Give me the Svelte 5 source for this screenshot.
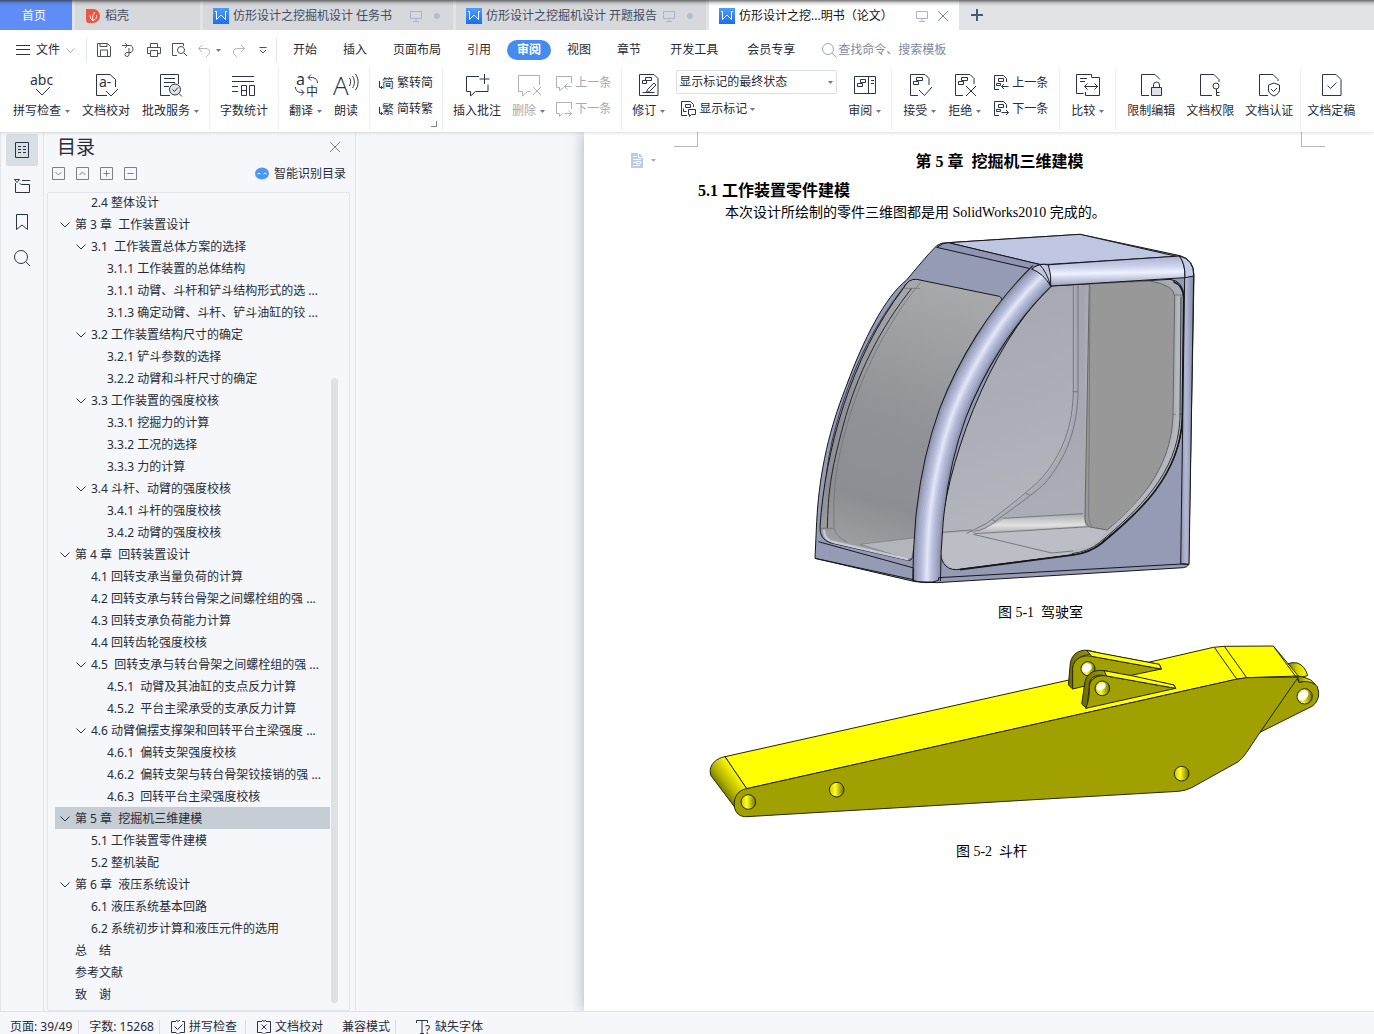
<script>
  const docTabs = [
    { title: '仿形设计之挖掘机设计 任务书', active: false },
    { title: '仿形设计之挖掘机设计 开题报告', active: false },
    { title: '仿形设计之挖...明书（论文）', active: true }
  ];

  const menus = ['开始', '插入', '页面布局', '引用', '审阅', '视图', '章节', '开发工具', '会员专享'];

  const toc = [
    [2, '2.4 整体设计'],
    [1, '第 3 章  工作装置设计', true],
    [2, '3.1  工作装置总体方案的选择', true],
    [3, '3.1.1 工作装置的总体结构'],
    [3, '3.1.1 动臂、斗杆和铲斗结构形式的选 ...'],
    [3, '3.1.3 确定动臂、斗杆、铲斗油缸的铰 ...'],
    [2, '3.2 工作装置结构尺寸的确定', true],
    [3, '3.2.1 铲斗参数的选择'],
    [3, '3.2.2 动臂和斗杆尺寸的确定'],
    [2, '3.3 工作装置的强度校核', true],
    [3, '3.3.1 挖掘力的计算'],
    [3, '3.3.2 工况的选择'],
    [3, '3.3.3 力的计算'],
    [2, '3.4 斗杆、动臂的强度校核', true],
    [3, '3.4.1 斗杆的强度校核'],
    [3, '3.4.2 动臂的强度校核'],
    [1, '第 4 章  回转装置设计', true],
    [2, '4.1 回转支承当量负荷的计算'],
    [2, '4.2 回转支承与转台骨架之间螺栓组的强 ...'],
    [2, '4.3 回转支承负荷能力计算'],
    [2, '4.4 回转齿轮强度校核'],
    [2, '4.5  回转支承与转台骨架之间螺栓组的强 ...', true],
    [3, '4.5.1  动臂及其油缸的支点反力计算'],
    [3, '4.5.2  平台主梁承受的支承反力计算'],
    [2, '4.6 动臂偏摆支撑架和回转平台主梁强度 ...', true],
    [3, '4.6.1  偏转支架强度校核'],
    [3, '4.6.2  偏转支架与转台骨架铰接销的强 ...'],
    [3, '4.6.3  回转平台主梁强度校核'],
    [1, '第 5 章  挖掘机三维建模', true],
    [2, '5.1 工作装置零件建模'],
    [2, '5.2 整机装配'],
    [1, '第 6 章  液压系统设计', true],
    [2, '6.1 液压系统基本回路'],
    [2, '6.2 系统初步计算和液压元件的选用'],
    [1, '总　结'],
    [1, '参考文献'],
    [1, '致　谢']
  ];
  const current = '第 5 章  挖掘机三维建模';

  // Layered strokes that shade the curved front pillar as a round tube.
  const tube = [
    [80, '#8e93ad'], [70, '#9ba0bd'], [58, '#a6acca'], [46, '#b0b6d3'],
    [34, '#bcc2de'], [23, '#c9cee8'], [14, '#d6daf0'], [6, '#e0e4f7']
  ];
</script>

{#snippet caret()}
  <svg class="caret" width="5" height="3" viewBox="0 0 5 3"><path d="M0 0h5L2.5 3z" /></svg>
{/snippet}

{#snippet screen()}
  <svg class="ic screen" width="12" height="12" viewBox="0 0 12 12"><path d="M.5 1.5h11v7H.5zM6 8.5v3M3 11.5h6" /></svg>
{/snippet}

{#snippet small(name)}
  <svg class="ic" width="16" height="16" viewBox="0 0 16 16">
    {#if name === 'simp'}
      <text x="4" y="13" font-size="12">简</text><path d="M1.5 6v6.500h3M3 11l1.500 1.500L3 14" />
    {:else if name === 'trad'}
      <text x="4" y="13" font-size="12">繁</text><path d="M1.500 6v6.500h3M3 11l1.500 1.500L3 14" />
    {:else if name === 'cprev'}
      <path d="M15.500 8V1.500H.500v11h3v3l4-3M15.500 11.500h-7M11.500 8.500l-3 3 3 3" />
    {:else if name === 'cnext'}
      <path d="M15.500 8V1.500H.500v11h3v3l3-3M8.500 12.500h7M12.500 9.500l3 3-3 3" />
    {:else if name === 'marks'}
      <path d="M7 14.500H1.500V.500h9l3 3V6M5.500 3.500h5v3h-5zM3.500 7.500v3h3M8.500 8.500h7v5h-4l-2 2v-2h-1z" />
    {:else if name === 'prev'}
      <path d="M6 14.500H1.500V.500h9l3 3V7M5.500 3.500h5v3h-5zM3.500 8.500h4v2h-4zM15.500 11.500h-7M11 9l-2.500 2.500L11 14" />
    {:else if name === 'next'}
      <path d="M6 14.500H1.500V.500h9l3 3V7M5.500 3.500h5v3h-5zM3.500 8.500h4v2h-4zM8.500 11.500h7M13 9l2.500 2.500L13 14" />
    {:else if name === 'check'}
      <path d="M6 2.500H1.500v11H6l2 2 2-2h4.500v-11H12M6 1l2 1.500L10 1M4.500 7.500l3 3 5-5" />
    {:else if name === 'cross'}
      <path d="M6 2.500H1.500v11H6l2 2 2-2h4.500v-11H10M6 1l2 1.500L10 1M5.500 5.500l5 5M10.500 5.500l-5 5" />
    {:else if name === 'font'}
      <path d="M.500 4V1.500h11V4M6 1.500v13M4 14.500h4" /><text x="9" y="15" font-size="12">?</text>
    {/if}
  </svg>
{/snippet}

{#snippet big(name)}
  <svg class="ic" width="26" height="26" viewBox="0 0 26 26">
    {#if name === 'spell'}
      <text x="1" y="13" font-size="14">abc</text><path d="M7 17l6 6 8-8" />
    {:else if name === 'proof'}
      <path d="M14 23.500H3.500v-21H17l5.500 5V15M13 19l5 5 7-7" /><text x="6" y="15" font-size="14">a-</text>
    {:else if name === 'batch'}
      <path d="M12 23.500H2.500v-21h18V12M6 6.500h11M6 10.500h11M6 14.500h5" />
      <circle cx="17" cy="17.500" r="5.500" class="soft" /><path d="M14.500 17.500l2 2 3.500-4M21 21.500l3 3" />
    {:else if name === 'count'}
      <path d="M1 4.500h22M1 9.500h22M1 14.500h6M1 19.500h6M10.500 13.500h5v10h-5zM10.500 18.500h5M18.500 13.500h5v10h-5z" />
    {:else if name === 'trans'}
      <text x="3" y="13" font-size="16">a</text><text x="13" y="24" font-size="12">中</text>
      <path d="M24.500 11c0-4-3-6-9-5.500M18 2.500l-3 3 3 3M2.500 15c0 4 3 6 8 5.500M8 17.500l3 3-3 3" />
    {:else if name === 'read'}
      <text x="0" y="23" font-size="26" class="thin">A</text>
      <path d="M16.500 6c1.500 2 1.500 5 0 8M19.500 4c2.500 3.500 2.500 8.500 0 12M22.500 2c3.500 5 3.500 11 0 16" />
    {:else if name === 'comment'}
      <path d="M15 4.500H2.500v15h4V24l5-4.500h12.500V12.500M20.500 2v10M15.500 7h10" />
    {:else if name === 'delcomment'}
      <path d="M23.500 13V3.500h-21v16h4V24l5-4.500h3M17 15l8 8M25 15l-8 8" />
    {:else if name === 'track'}
      <path d="M3.500 2.500H18l4 4v17H3.500zM9.500 5.500h6v3h-6zM6.500 8.500h4v3h-4zM11.500 17.500l6.500-6.500 2 2-6.500 6.500-3 1z M6.500 20.500h12" />
    {:else if name === 'pane'}
      <path d="M2.500 4.500h21v17h-21zM16.500 4.500v17M8.500 7.500h5v3h-5zM5.500 11.500h5v3h-5zM19 8.500h3M19 11.500h3" />
    {:else if name === 'accept'}
      <path d="M11 23.500H3.500v-21H18l4 4V13M9.500 5.500h6v3h-6zM6.500 9.500h5v3h-5zM12 18l5.500 5.500L25 15" />
    {:else if name === 'reject'}
      <path d="M11 23.500H3.500v-21H18l4 4V12M9.500 5.500h6v3h-6zM6.500 9.500h5v3h-5zM14 14l10 10M24 14L14 24" />
    {:else if name === 'compare'}
      <path d="M16.500 5V2.500h-15v19h7M16.500 5.500h8v18h-14V20M5 6.500h7M5 9.500h5M9.500 14.500h13M12.500 11.500l-3 3 3 3M19.500 11.500l3 3-3 3" />
    {:else if name === 'lock'}
      <path d="M11 23.500H3.500v-21H17l5 5" /><path class="soft" d="M13.500 15.500h10v8h-10z" /><path d="M15.500 15.500V13a3 3 0 0 1 6 0v2.500" />
    {:else if name === 'key'}
      <path d="M15 23.500H3.500v-21H17l5 5V10" /><circle cx="19" cy="14" r="3" /><path d="M19.500 17v6.500h3M19.500 20.500h3" />
    {:else if name === 'shield'}
      <path d="M12 23.500H3.500v-21H17l5 5V9M18 11l5.500 2v5c0 3-2.500 4.500-5.500 6-3-1.500-5.500-3-5.500-6v-5zM15 17l2.500 2.500L21 16" />
    {:else if name === 'final'}
      <path d="M4.500 2.500H18l5 5v16H4.500zM9.500 13.500l3 3 6-6" />
    {/if}
  </svg>
{/snippet}

{#snippet tool(name, label, drop = false, off = false)}
  <button class="tool" disabled={off}>
    {@render big(name)}
    <span class="lab">{label}{#if drop}{@render caret()}{/if}</span>
  </button>
{/snippet}

{#snippet row(name, label, off = false)}
  <button class="row" disabled={off}>{@render small(name)}{label}</button>
{/snippet}

{#snippet wlogo()}
  <svg width="16" height="16" viewBox="0 0 16 16">
    <defs><linearGradient id="wg" x2="0" y2="1"><stop stop-color="#4f9bfa" /><stop offset="1" stop-color="#1b6ff0" /></linearGradient></defs>
    <path fill="url(#wg)" d="M0 0h16v16H0z" /><path fill="none" stroke="#fff" d="M2 3.500h1.500v8L8 7l4.500 4.500v-8H14" />
  </svg>
{/snippet}

<div class="app">
  <header>
    <div class="tabs">
      <button class="home">首页</button>
      <button class="tab docer">
        <svg width="14" height="14" viewBox="0 0 14 14"><path fill="#ee5543" d="M0 0h7a7 7 0 1 1 0 14H3a3 3 0 0 1-3-3z" /><path fill="none" stroke="#fff" d="M4 6c0 3 1 4.500 3 5.500C6 8 7 5 9 3M7 11.500c3-1 4-3 3.500-5.500" /></svg>
        稻壳
      </button>
      {#each docTabs as t}
        <button class="tab" class:active={t.active}>
          {@render wlogo()}<span class="name">{t.title}</span>{@render screen()}
          {#if t.active}
            <svg class="ic x" width="10" height="10" viewBox="0 0 10 10"><path d="M0 0l10 10M10 0L0 10" /></svg>
          {:else}<i class="dot"></i>{/if}
        </button>
      {/each}
      <button class="plus" aria-label="新建"><svg width="12" height="12" viewBox="0 0 12 12"><path d="M6 0v12M0 6h12" stroke="#4a5a75" stroke-width="2" /></svg></button>
    </div>

    <nav class="menu">
      <button class="file">
        <svg class="ic" width="14" height="10" viewBox="0 0 14 10"><path d="M0 .500h14M0 4.500h14M0 9.500h14" /></svg>
        文件
        <svg class="ic pale" width="9" height="5" viewBox="0 0 9 5"><path d="M.500.500l4 4 4-4" /></svg>
      </button>
      <div class="quick">
        <button aria-label="保存"><svg class="ic" width="14" height="14" viewBox="0 0 14 14"><path d="M.500.500h10l3 3v10H.500zM3 .500v3h7v-3M3.500 13v-6h7v6" /></svg></button>
        <button aria-label="输出"><svg class="ic" width="14" height="14" viewBox="0 0 14 14"><path d="M0 2.500h9a4 4 0 0 1 0 7H5a2 2 0 1 0 2 2V5M3 0l2.500 2.500L3 5" /></svg></button>
        <button aria-label="打印"><svg class="ic" width="14" height="14" viewBox="0 0 14 14"><path d="M3.500 4V.500h7V4M3 10.500H.500v-6h13v6H11M3.500 7.500h7v6h-7z" /></svg></button>
        <button aria-label="打印预览"><svg class="ic" width="15" height="14" viewBox="0 0 15 14"><path d="M5 12.500H.500v-12h11V3M12 10l3 3" /><circle cx="9" cy="7" r="3.500" /></svg></button>
        <button aria-label="撤销" class="undo"><svg class="ic pale" width="13" height="13" viewBox="0 0 13 13"><path d="M4 1L.500 4.500 4 8M.500 4.500H8a3.500 3.500 0 0 1 2 6.500L8 13" /></svg>{@render caret()}</button>
        <button aria-label="恢复"><svg class="ic pale" width="13" height="13" viewBox="0 0 13 13"><path d="M9 1l3.500 3.500L9 8M12.500 4.500H5a3.500 3.500 0 0 0-2 6.500L5 13" /></svg></button>
        <button aria-label="更多" class="more"><svg class="ic" width="8" height="8" viewBox="0 0 8 8"><path d="M.500 1.500h7M1 4l3 3 3-3" /></svg></button>
      </div>
      {#each menus as m}
        <button class="m" class:wide={m === '开发工具'} class:on={m === '审阅'}>{m}</button>
      {/each}
      <label class="find">
        <svg class="ic" width="15" height="15" viewBox="0 0 15 15"><circle cx="6" cy="6" r="5.500" /><path d="M10 10l4.500 4.500" /></svg>
        <input aria-label="查找命令" placeholder="查找命令、搜索模板" />
      </label>
    </nav>

    <div class="ribbon">
      <div class="group">
        {@render tool('spell', '拼写检查', true)}
        {@render tool('proof', '文档校对')}
        {@render tool('batch', '批改服务', true)}
      </div>
      <div class="group">{@render tool('count', '字数统计')}</div>
      <div class="group">
        {@render tool('trans', '翻译', true)}
        {@render tool('read', '朗读')}
      </div>
      <div class="group corner">
        <div class="rows">{@render row('simp', '繁转简')}{@render row('trad', '简转繁')}</div>
      </div>
      <div class="group">
        {@render tool('comment', '插入批注')}
        {@render tool('delcomment', '删除', true, true)}
        <div class="rows">{@render row('cprev', '上一条', true)}{@render row('cnext', '下一条', true)}</div>
      </div>
      <div class="group">
        {@render tool('track', '修订', true)}
        <div class="state">
          <div class="combo">
            <select aria-label="标记状态"><option>显示标记的最终状态</option></select>{@render caret()}
          </div>
          <button class="row marks">{@render small('marks')}显示标记{@render caret()}</button>
        </div>
        {@render tool('pane', '审阅', true)}
      </div>
      <div class="group changes">
        {@render tool('accept', '接受', true)}
        {@render tool('reject', '拒绝', true)}
        <div class="rows">{@render row('prev', '上一条')}{@render row('next', '下一条')}</div>
      </div>
      <div class="group">{@render tool('compare', '比较', true)}</div>
      <div class="group last">
        {@render tool('lock', '限制编辑')}
        {@render tool('key', '文档权限')}
        {@render tool('shield', '文档认证')}
      </div>
      <div class="group end">{@render tool('final', '文档定稿')}</div>
    </div>
  </header>

  <main>
    <aside class="rail">
      <button class="on" aria-label="目录"><svg class="ic" width="16" height="16" viewBox="0 0 16 16"><path d="M1.500.500h13v15h-13zM4 4.500h3M9 4.500h3M4 7.500h3M9 7.500h3M4 10.500h3M9 10.500h3" /></svg></button>
      <button aria-label="章节"><svg class="ic" width="16" height="16" viewBox="0 0 16 16"><path d="M.500 1.500h5L3 4.500zM8 2.500h8M1.500 5v9.500h14v-8h-8l-2-1" /></svg></button>
      <button aria-label="书签"><svg class="ic" width="16" height="18" viewBox="0 0 16 18"><path d="M2.500 1.500h11v15L8 12l-5.500 4.500z" /></svg></button>
      <button aria-label="查找"><svg class="ic" width="16" height="16" viewBox="0 0 16 16"><circle cx="7" cy="7" r="6.500" /><path d="M11.500 11.500L16 16" /></svg></button>
    </aside>

    <section class="panel">
      <div class="head">
        <h2>目录</h2>
        <button aria-label="关闭"><svg class="ic" width="10" height="10" viewBox="0 0 10 10"><path d="M0 0l10 10M10 0L0 10" /></svg></button>
      </div>
      <div class="ops">
        <button aria-label="展开"><svg class="ic" width="13" height="13" viewBox="0 0 13 13"><path d="M.500.500h12v12H.500zM3.500 5l3 3 3-3" /></svg></button>
        <button aria-label="收起"><svg class="ic" width="13" height="13" viewBox="0 0 13 13"><path d="M.500.500h12v12H.500zM3.500 8l3-3 3 3" /></svg></button>
        <button aria-label="增加"><svg class="ic" width="13" height="13" viewBox="0 0 13 13"><path d="M.500.500h12v12H.500zM3.500 6.500h6M6.500 3.500v6" /></svg></button>
        <button aria-label="减少"><svg class="ic" width="13" height="13" viewBox="0 0 13 13"><path d="M.500.500h12v12H.500zM3.500 6.500h6" /></svg></button>
        <button class="smart">
          <svg width="14" height="13" viewBox="0 0 14 13"><ellipse cx="7" cy="6.500" rx="7" ry="6" fill="#4a98f5" /><path d="M2.500 7q1.500-2 3 0M8.500 7q1.500-2 3 0" fill="none" stroke="#fff" /></svg>
          智能识别目录
        </button>
      </div>
      <div class="list">
        <ul>
          {#each toc as [level, text, open]}
            <li class="l{level}" class:sel={text === current}>
              {#if open}<svg class="ic" width="10" height="6" viewBox="0 0 10 6"><path d="M.500.500L5 5 9.500.500" /></svg>{/if}
              <a href="#doc">{text}</a>
            </li>
          {/each}
        </ul>
        <i class="thumb"></i>
      </div>
    </section>

    <div class="canvas">
      <article class="page" id="doc">
        <i class="mark left"></i>
        <i class="mark right"></i>
        <span class="badge">
          <svg width="12" height="15" viewBox="0 0 12 15"><path fill="#b9cde8" d="M0 0h8l4 4v11H0z" /><path fill="none" stroke="#fff" d="M7.500 0v4.500H12M2 3.500h4M2 6.500h8M2 9.500h3M5.500 8.500h4v2h-4zM2 12.500h7" /></svg>
          {@render caret()}
        </span>
        <h1>第 5 章&nbsp; 挖掘机三维建模</h1>
        <h3>5.1 工作装置零件建模</h3>
        <p>本次设计所绘制的零件三维图都是用 SolidWorks2010 完成的。</p>

        <figure class="cab">
          <svg width="380" height="350" viewBox="42 27 1140 1050">
            <defs>
              <linearGradient id="beam" x1="0" y1="0" x2="0.080" y2="1"><stop stop-color="#a4aac8" /><stop offset=".4" stop-color="#ccd2ec" /><stop offset=".6" stop-color="#eef1ff" /><stop offset="1" stop-color="#9aa0be" /></linearGradient>
              <linearGradient id="post"><stop stop-color="#8a8fab" /><stop offset=".4" stop-color="#b4bad6" /><stop offset="1" stop-color="#8489a4" /></linearGradient>
              <linearGradient id="glass" x1=".5" x2=".3" y2="1"><stop stop-color="#a6a8aa" /><stop offset=".5" stop-color="#909297" /><stop offset=".8" stop-color="#8c8e93" /><stop offset="1" stop-color="#a0a1a3" /></linearGradient>
              <linearGradient id="inner" x2=".3" y2="1"><stop stop-color="#a4a7af" /><stop offset=".6" stop-color="#adb0b8" /><stop offset="1" stop-color="#b7b9c0" /></linearGradient>
              <linearGradient id="sill" x2="0" y2="1"><stop stop-color="#aaacb0" /><stop offset=".6" stop-color="#e2e2e2" /><stop offset="1" stop-color="#b4b5b9" /></linearGradient>
            </defs>
            <g stroke="#16171c" stroke-width="3" stroke-linejoin="round" fill="none">
              <path fill="#969bb5" d="M410 62Q425 51 445 53L840 28 1140 92Q1182 103 1182 150L1166 1020Q1160 1027 1150 1028L410 1073 345 1070 45 1000 50 890C60 700 105 570 140 480C190 345 255 215 320 165C345 135 380 92 410 62Z" />
              <path fill="#bfc6e1" d="M445 53L840 28 1130 94 750 118 718 118Z" />
              <path fill="#8f95b2" d="M410 67Q428 53 445 53L718 118 695 132Z" />
              <path stroke="#3a3c44" stroke-width="3" d="M318 178C220 300 160 430 120 560S72 780 70 910" />
              <path fill="url(#glass)" d="M310 190Q325 160 350 163L598 214Q607 217 605 235C480 430 375 640 347 935L335 1003Q330 1008 320 1005L90 953Q58 942 60 905C75 680 150 400 310 190Z" />
              <path fill="#b3b5bc" stroke="#777" stroke-width="2" d="M180 958L347 938 335 1000 320 1002Z" />
              <path stroke="#26282f" stroke-width="3" d="M335 190C240 310 170 450 130 600S85 800 82 910" />
              <path stroke="#6a6c70" stroke-width="2" d="M362 172C280 270 200 410 150 570S100 820 102 905Q105 935 140 950M62 910H100M310 190H360" />
              <path stroke="#c5c9d8" stroke-width="7" d="M72 915Q73 945 100 951L325 1003" />
              <path d="M55 950L345 1030M45 1000L345 1065" stroke-width="3" />
              <path fill="url(#inner)" d="M752 183L1110 163Q1150 168 1152 215L1147 580C1140 750 1020 860 900 955Q865 985 810 990L470 1034Q415 1035 420 950C435 730 560 370 752 183Z" />
              <path fill="#9c9fa8" stroke="none" d="M826 180H855V890L580 885C640 840 690 800 715 775C800 690 822 600 826 500Z" opacity=".35" />
              <path fill="url(#sill)" stroke="none" d="M620 878L850 867 856 902 530 922Z" />
              <path fill="#bcbec5" stroke="none" d="M425 925L520 922 860 905 922 916 895 955Q865 985 810 987L470 1030Q425 1030 422 950Z" />
              <path fill="#989898" stroke="#666" stroke-width="3" d="M868 177L1050 168Q1124 180 1124 215L1119 570C1115 740 1000 850 922 915L870 906Q853 900 855 870Z" />
              <g stroke="#77797d" stroke-width="3">
                <path d="M820 181V500C818 600 790 690 715 770C660 820 600 865 560 895L500 925M834 180V500C832 610 800 700 730 780C670 830 610 870 585 890Q555 915 525 918M818 500h16M676 803l14 8M575 883l14 8" />
                <path d="M610 880L850 866M425 922L515 915 525 926 870 905M520 928L755 984 850 975M870 180L866 880Q868 900 880 908M1124 210H1150M1120 568H1147" />
              </g>
              <path stroke="#b5b8bf" stroke-width="12" d="M1137 215L1133 580C1126 740 1010 850 895 950Q865 975 820 981" />
              <path stroke="#33353b" stroke-width="3" d="M1143 215L1140 580C1133 745 1015 855 898 953Q865 980 815 986" />
              <path stroke-width="5" d="M1120 170Q1150 180 1151 220L1147 580C1140 750 1020 860 905 955Q870 983 820 990L480 1034" />
              <path fill="url(#post)" stroke-width="3" d="M1154 156L1181 152 1167 1018 1142 1016 1148 600Z" />
              <path fill="url(#beam)" d="M735 120L1138 93Q1156 115 1155 158L752 183Z" />
              <path fill="#c4cae5" stroke-width="3" d="M1138 93Q1182 103 1181 153L1155 158Q1156 115 1138 93Z" />
              <path stroke="#16171c" stroke-width="86" d="M727 152C600 275 510 430 458 565C420 670 398 780 388 890Q380 980 380 1068" />
              {#each tube as [w, c]}
                <path stroke={c} stroke-width={w} d="M727 152C600 275 510 430 458 565C420 670 398 780 388 890Q380 980 380 1068" />
              {/each}
              <path fill="#c2c8e3" stroke-width="3" d="M695 132Q720 112 745 120Q755 150 752 183Q730 145 695 132Z" />
              <path stroke-width="3" d="M718 118Q740 140 752 183M340 1030V1066Q378 1080 416 1066V1058L1145 1017 1166 1018" />
            </g>
          </svg>
          <figcaption>图 5-1&nbsp; 驾驶室</figcaption>
        </figure>

        <figure class="arm">
          <svg width="620" height="190" viewBox="0 0 1860 570">
            <defs>
              <linearGradient id="nose" gradientUnits="userSpaceOnUse" x1="55" y1="475" x2="115" y2="430"><stop stop-color="#5c5c00" /><stop offset=".5" stop-color="#b4b400" /><stop offset="1" stop-color="#f4f400" /></linearGradient>
              <linearGradient id="hole"><stop stop-color="#c9c900" /><stop offset=".4" stop-color="#ffff20" /><stop offset="1" stop-color="#6d6d00" /></linearGradient>
              <linearGradient id="bend"><stop stop-color="#6b6b00" /><stop offset=".5" stop-color="#d2d200" /><stop offset="1" stop-color="#ffff00" /></linearGradient>
            </defs>
            <g stroke="#25250a" stroke-width="3" stroke-linejoin="round">
              <path fill="url(#bend)" d="M1760 88Q1775 80 1792 84Q1815 92 1823 122L1790 130Z" />
              <path fill="#a0a000" d="M1680 292L1790 128 1797 142Q1835 130 1852 155Q1865 190 1838 213Z" />
              <path fill="url(#bend)" d="M1790 122L1815 128Q1835 132 1845 148Q1825 135 1797 142Z" />
              <path fill="#ffff00" d="M75 365L1345 82 1540 37 1572 34 1720 33 1795 123 1640 128 1608 133 140 461Z" />
              <path fill="url(#nose)" d="M75 365C45 370 23 395 33 422L103 515 140 461Z" />
              <path fill="#a0a000" d="M140 461L1608 133 1640 128 1795 126 1680 292 1640 352Q1628 370 1615 380L1475 458Q1455 468 1435 469L1020 493 140 545C120 546 107 535 103 515C100 485 115 465 140 461Z" />
              <path fill="none" d="M1543 37L1610 132M1573 34L1640 128M1720 33L1786 123" />
              <path fill="url(#bend)" d="M1110 95C1110 65 1130 42 1165 46L1200 55 1378 88 1384 102 1200 65C1150 45 1115 80 1120 102L1118 162 1105 150Z" />
              <path fill="#a0a000" d="M1118 100C1120 70 1150 58 1175 64L1384 102 1240 132 1118 162Z" />
              <path fill="#ffff00" d="M1160 46L1178 50 1378 88 1384 102 1175 64Z" />
              <circle cx="1164" cy="101" r="21" fill="url(#hole)" /><ellipse cx="1160" cy="99" rx="16" ry="12" fill="#fff" stroke="none" transform="rotate(-30 1160 99)" />
              <path fill="url(#bend)" d="M1153 153C1155 120 1175 102 1212 107L1422 150 1427 160 1215 122C1185 115 1165 130 1168 155L1160 220 1145 207Z" />
              <path fill="#a0a000" d="M1168 155C1170 130 1195 118 1220 123L1427 160 1157 220C1168 195 1168 175 1168 155Z" />
              <path fill="#ffff00" d="M1212 107L1300 123 1422 150 1427 160 1220 123Z" />
              <circle cx="1207" cy="160" r="22" fill="url(#hole)" /><ellipse cx="1203" cy="155" rx="15" ry="10" fill="#fff" stroke="none" transform="rotate(-30 1203 155)" />
              <circle cx="1814" cy="184" r="23" fill="url(#hole)" /><ellipse cx="1809" cy="181" rx="18" ry="13" fill="#fff" stroke="none" transform="rotate(-40 1809 181)" />
              <circle cx="145" cy="501" r="22" fill="url(#hole)" />
              <circle cx="410" cy="464" r="22" fill="url(#hole)" />
              <circle cx="1445" cy="416" r="22" fill="url(#hole)" />
            </g>
          </svg>
          <figcaption>图 5-2&nbsp; 斗杆</figcaption>
        </figure>
      </article>
    </div>
  </main>

  <footer>
    <span class="pages">页面: 39/49</span>
    <span>字数: 15268</span>
    <button class="spell">{@render small('check')}拼写检查</button>
    <button class="proof">{@render small('cross')}文档校对</button>
    <span class="mode">兼容模式</span>
    <button class="miss">{@render small('font')}缺失字体</button>
  </footer>
</div>

<style>
  :global(body) { margin: 0; }
  * { box-sizing: border-box; }
  .app {
    height: 100vh; display: flex; flex-direction: column; overflow: hidden;
    font: 12px/16px "Noto Sans", "Noto Sans CJK SC", sans-serif; color: #262c38; background: #f5f7fa;
  }
  button { font: inherit; color: inherit; background: none; border: 0; padding: 0; white-space: nowrap; display: flex; align-items: center; }
  svg { display: block; flex: none; overflow: visible; }
  .ic { fill: none; stroke: #2b3346; }
  .ic text { stroke: none; fill: #2b3346; }
  .thin { font-family: "Open Sans", "Noto Sans", sans-serif; font-weight: 300; }
  .soft { fill: #dfe2e8; }
  .pale { stroke: #a9adb5; }
  .caret { fill: #6b7790; }

  header { background: #fff; position: relative; z-index: 1; box-shadow: 0 1px 3px rgba(0, 0, 0, 0.14); }
  .tabs { position: relative; display: flex; height: 30px; background: #e2e3e7; gap: 3px; }
  .tabs::after { content: ""; position: absolute; inset: 0 0 auto; height: 6px; background: linear-gradient(rgba(40, 40, 40, 0.65), rgba(80, 80, 80, 0.2) 50%, transparent); pointer-events: none; }
  .home { width: 72px; padding: 2px 4px 0 0; justify-content: center; background: #5f8df8; color: #fff; }
  .tab { width: 250px; padding: 2px 13px 0 10px; background: #d7d8dc; color: #414b61; }
  .tab .name { margin-left: 4px; flex: 1; text-align: left; }
  .tab.docer { width: 125px; padding-left: 11px; gap: 5px; }
  .tab.active { background: #fff; color: #111; padding-right: 11px; }
  .screen { stroke: #a9b5cc; }
  .dot { width: 6px; height: 6px; border-radius: 3px; background: #b1bdd3; margin-left: 12px; }
  .x { stroke: #75849f; margin-left: 10px; }
  .plus { margin-left: 9px; }

  .menu { display: flex; align-items: center; height: 36px; padding: 4px 0 0 16px; }
  .file { gap: 6px; padding-right: 11px; }
  .quick { display: flex; align-items: center; gap: 11px; height: 24px; padding: 0 9px 0 10px; margin-right: 3px; border: solid #e1e4ea; border-width: 0 1px; }
  .quick .ic { stroke: #4a4f5a; }
  .quick .pale { stroke: #b5b8bf; }
  .undo { gap: 5px; }
  .more { margin-left: 3px; }
  .m { height: 20px; padding: 0 13px; }
  .m.wide { padding: 0 16px; }
  .m.on { background: #468cf0; color: #fff; font-weight: 700; border-radius: 10px; padding: 0 10px; margin: 0 3px; }
  .find { display: flex; align-items: center; gap: 1px; margin-left: 14px; flex: 1; }
  .find .ic { stroke: #9aa5b8; }
  .find input { flex: 1; min-width: 0; border: 0; outline: 0; padding: 0; font: inherit; }
  .find input::placeholder { color: #7d8aa3; opacity: 1; }

  .ribbon { display: flex; height: 66px; padding: 2px 0 2px 3px; }
  .group { display: flex; gap: 11px; padding: 0 10px; border-right: 1px solid #eceef1; position: relative; flex: none; }
  .group:nth-child(n + 7) { padding: 0 11px; }
  .group:first-child, .group.changes { gap: 12px; }
  .group.last { padding-right: 7px; }
  .group.end { padding-left: 6px; border: 0; }
  .group.corner { padding: 0 9px 0 8px; }
  .corner::after { content: ""; position: absolute; right: 5px; bottom: 3px; width: 5px; height: 5px; border: solid #7c8496; border-width: 0 1px 1px 0; }
  .tool { flex-direction: column; padding-top: 4px; gap: 5px; align-self: flex-start; }
  .lab { display: flex; align-items: center; gap: 4px; }
  .tool:disabled, .row:disabled { color: #a6a9b0; }
  :disabled .ic { stroke: #adb0b6; }
  .rows { display: flex; flex-direction: column; gap: 10px; padding-top: 7px; }
  .row { gap: 3px; height: 16px; }
  .state { padding-top: 2px; }
  .combo { position: relative; width: 161px; }
  .combo .caret { position: absolute; right: 4px; top: 11px; }
  select { appearance: none; width: 100%; height: 24px; border: 1px solid #dcdfe5; border-radius: 2px; background: #fff; font: inherit; color: inherit; padding: 0 2px; }
  .marks { margin: 7px 0 0 4px; }

  main { flex: 1; min-height: 0; display: flex; }
  .rail { width: 44px; flex: none; border: solid #e2e5ea; border-width: 0 1px; display: flex; flex-direction: column; align-items: center; gap: 4px; padding-top: 2px; }
  .rail button { width: 32px; height: 32px; justify-content: center; border-radius: 2px; }
  .rail .on { background: #d9dee5; }
  .panel { width: 312px; flex: none; border-right: 1px solid #e2e5ea; padding: 3px 5px 0 3px; display: flex; flex-direction: column; }
  .head { display: flex; justify-content: space-between; align-items: center; height: 24px; padding: 0 10px; }
  .head .ic { stroke: #7a8190; }
  h2 { margin: 0; font-size: 19px; line-height: 24px; font-weight: 400; }
  .ops { display: flex; align-items: center; gap: 11px; height: 29px; padding: 0 4px 0 5px; }
  .ops .ic { stroke: #7b808b; }
  .smart { margin-left: auto; gap: 5px; }
  .list { flex: 1; min-height: 0; margin-top: 4px; border: 1px solid #e2e5ea; border-radius: 2px; overflow: hidden; position: relative; }
  ul { list-style: none; margin: -2px 19px 0 7px; padding: 0; }
  li { display: flex; align-items: center; height: 22px; padding-top: 2px; white-space: pre; }
  li .ic { margin: 0 5px 0 -15px; }
  li.sel { background: #c6cdd5; }
  .l1 { padding-left: 20px; }
  .l2 { padding-left: 36px; }
  .l3 { padding-left: 52px; }
  a { color: inherit; text-decoration: none; }
  .thumb { position: absolute; right: 11px; top: 185px; bottom: 7px; width: 7px; border-radius: 4px; background: #dfe2e5; }

  .canvas { flex: 1; min-width: 0; display: flex; padding-left: 228px; }
  .page {
    flex: 1; min-width: 0; position: relative; background: #fff; padding: 19px 73px 0 114px; color: #000;
    box-shadow: 0 0 14px rgba(60, 70, 80, 0.4); font: 14px/22px "Liberation Serif", "Noto Sans CJK SC", serif;
  }
  .mark { position: absolute; top: 0; width: 24px; height: 15px; border-bottom: 1px solid #b9b9b9; }
  .left { left: 90px; border-right: 1px solid #b9b9b9; }
  .right { right: 49px; border-left: 1px solid #b9b9b9; }
  .badge { position: absolute; left: 47px; top: 21px; display: flex; align-items: center; gap: 8px; }
  .badge .caret { fill: #aaa; }
  h1, h3 { margin: 0; font-size: 16px; line-height: 22px; font-weight: 700; }
  h1 { text-align: center; }
  h3 { margin-top: 7px; }
  p { margin: 0; text-indent: 27px; white-space: nowrap; }
  figure { margin: 0; }
  .cab { width: 380px; margin: 10px 0 0 116px; }
  .cab figcaption { text-align: center; padding-left: 73px; }
  .arm { width: 620px; margin: 11px 0 0 2px; }
  figcaption { margin-top: 18px; }
  .arm figcaption { text-align: center; padding-right: 37px; margin-top: 16px; }

  footer { display: flex; align-items: center; height: 23px; flex: none; padding: 8px 0 0 5px; border-top: 1px solid #e0e3e8; position: relative; background: #f5f7fa; }
  footer > * { padding: 0 5px; height: 14px; line-height: 14px; gap: 3px; white-space: nowrap; border-right: 1px solid #d8dbe1; }
  footer > * + * { padding-left: 10px; }
  footer .pages { padding-right: 6px; }
  footer .spell { padding-right: 8px; }
  footer .proof, footer .miss { border: 0; }
  footer .mode { padding-left: 14px; }
  footer .miss { padding-left: 20px; }
</style>
